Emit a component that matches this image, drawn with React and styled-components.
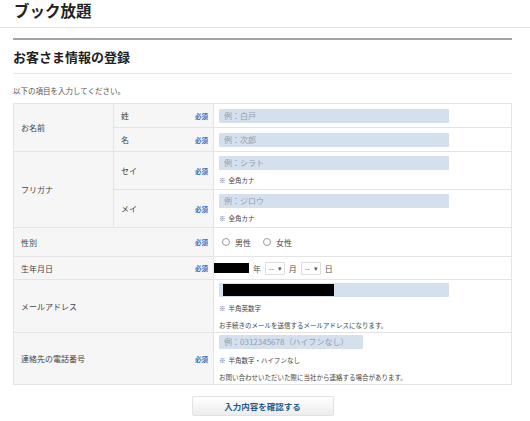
import React from 'react'
import styled, { createGlobalStyle } from 'styled-components'

const GlobalStyle = createGlobalStyle`
  body {
    margin: 0;
    background: #fff;
    font-family: "Noto Sans CJK JP", "Noto Sans", sans-serif;
    color: #333;
  }
`

const Header = styled.header`
  height: 26px;
  border-bottom: 1px solid #e4e4e4;
  padding-left: 14px;
  padding-top: 1px;
`

const Brand = styled.h1`
  margin: 0;
  font-size: 15.5px;
  line-height: 18px;
  font-weight: 700;
  color: #222;
`

const Main = styled.main`
  padding: 10px 18px 0 13px;
`

const SectionTitle = styled.h2`
  margin: 0;
  border-top: 2px solid #a3a3a3;
  border-bottom: 1px solid #e6e6e6;
  height: 33px;
  line-height: 33px;
  font-size: 13px;
  font-weight: 700;
  color: #222;
`

const Intro = styled.p`
  margin: 0;
  padding: 11px 0 6px;
  font-size: 7.5px;
  line-height: 12px;
  color: #555;
`

const Table = styled.table`
  width: 100%;
  border-collapse: collapse;
  border: 1px solid #e4e4e4;
  table-layout: fixed;
`

const Row = styled.tr`
  height: ${p => p.h}px;
`

const LabelCell = styled.td`
  background: #f6f6f6;
  border: 1px solid #e4e4e4;
  padding: 0 5px 0 7px;
  font-size: 8px;
  color: #444;
  vertical-align: middle;
`

const LabelInner = styled.div`
  display: flex;
  justify-content: space-between;
  align-items: center;
`

const Required = styled.span`
  font-size: 6.5px;
  font-weight: 700;
  color: #2f6fc2;
`

const FieldCell = styled.td`
  border: 1px solid #e4e4e4;
  padding: 0 5px;
  vertical-align: middle;
  background: #fff;
`

const TextInput = styled.div`
  width: ${p => p.w || 230}px;
  height: 14px;
  background: #d5e0ef;
  border-radius: 1px;
  padding-left: 5px;
  box-sizing: border-box;
  font-size: 8px;
  line-height: 14px;
  color: #8f9db1;
  position: relative;
`

const Note = styled.div`
  font-size: 6.5px;
  color: #444;
  margin-top: ${p => p.mt || 5}px;
`

const Mark = styled.span`
  color: #666;
  margin-right: 3px;
`

const Radios = styled.div`
  display: flex;
  align-items: center;
  gap: 12px;
  font-size: 8px;
  color: #444;
  padding-left: 3px;
`

const RadioLabel = styled.label`
  display: flex;
  align-items: center;
  gap: 5px;
`

const RadioCircle = styled.span`
  width: 6px;
  height: 6px;
  border: 1px solid #9a9a9a;
  border-radius: 50%;
`

const DateRow = styled.div`
  display: flex;
  align-items: center;
  gap: 4px;
  font-size: 8px;
  color: #555;
  margin-left: -5px;
`

const Redact = styled.span`
  display: inline-block;
  width: ${p => p.w}px;
  height: ${p => p.h}px;
  background: #000;
`

const Select = styled.span`
  display: inline-flex;
  align-items: center;
  gap: 4px;
  height: 11px;
  padding: 0 2px 0 3px;
  border: 1px solid #dcdcdc;
  border-radius: 1px;
  font-size: 7px;
  color: #555;
`

const EmailRedact = styled.span`
  position: absolute;
  left: 4px;
  top: 1px;
  width: 111px;
  height: 12px;
  background: #000;
`

const Actions = styled.div`
  display: flex;
  justify-content: center;
  padding-top: 11px;
`

const Button = styled.button`
  width: 142px;
  height: 20px;
  border: 1px solid #e2e2e2;
  border-radius: 2px;
  background: linear-gradient(#ffffff, #ececec);
  font-family: inherit;
  font-size: 8.5px;
  font-weight: 700;
  color: #1f5b8e;
`

function Label({ text, required, rowSpan, colSpan }) {
  return (
    <LabelCell rowSpan={rowSpan} colSpan={colSpan}>
      <LabelInner>
        <span>{text}</span>
        {required && <Required>必須</Required>}
      </LabelInner>
    </LabelCell>
  )
}

export default function App() {
  return (
    <>
      <GlobalStyle />
      <Header>
        <Brand>ブック放題</Brand>
      </Header>
      <Main>
        <SectionTitle>お客さま情報の登録</SectionTitle>
        <Intro>以下の項目を入力してください。</Intro>
        <Table>
          <colgroup>
            <col style={{ width: 100 }} />
            <col style={{ width: 100 }} />
            <col />
          </colgroup>
          <tbody>
            <Row h={24}>
              <Label text="お名前" rowSpan={2} />
              <Label text="姓" required />
              <FieldCell><TextInput>例：白戸</TextInput></FieldCell>
            </Row>
            <Row h={24}>
              <Label text="名" required />
              <FieldCell><TextInput>例：次郎</TextInput></FieldCell>
            </Row>
            <Row h={38}>
              <Label text="フリガナ" rowSpan={2} />
              <Label text="セイ" required />
              <FieldCell>
                <TextInput>例：シラト</TextInput>
                <Note><Mark>※</Mark>全角カナ</Note>
              </FieldCell>
            </Row>
            <Row h={38}>
              <Label text="メイ" required />
              <FieldCell>
                <TextInput>例：ジロウ</TextInput>
                <Note><Mark>※</Mark>全角カナ</Note>
              </FieldCell>
            </Row>
            <Row h={29}>
              <Label text="性別" required colSpan={2} />
              <FieldCell>
                <Radios>
                  <RadioLabel><RadioCircle />男性</RadioLabel>
                  <RadioLabel><RadioCircle />女性</RadioLabel>
                </Radios>
              </FieldCell>
            </Row>
            <Row h={23}>
              <Label text="生年月日" required colSpan={2} />
              <FieldCell>
                <DateRow>
                  <Redact w={35} h={10} />
                  <span>年</span>
                  <Select>--<span>▾</span></Select>
                  <span>月</span>
                  <Select>--<span>▾</span></Select>
                  <span>日</span>
                </DateRow>
              </FieldCell>
            </Row>
            <Row h={53}>
              <Label text="メールアドレス" colSpan={2} />
              <FieldCell>
                <TextInput><EmailRedact /></TextInput>
                <Note mt={6}><Mark>※</Mark>半角英数字</Note>
                <Note mt={7}>お手続きのメールを送信するメールアドレスになります。</Note>
              </FieldCell>
            </Row>
            <Row h={52}>
              <Label text="連絡先の電話番号" required colSpan={2} />
              <FieldCell>
                <TextInput w={144}>例：0312345678（ハイフンなし）</TextInput>
                <Note mt={6}><Mark>※</Mark>半角数字・ハイフンなし</Note>
                <Note mt={7}>お問い合わせいただいた際に当社から連絡する場合があります。</Note>
              </FieldCell>
            </Row>
          </tbody>
        </Table>
        <Actions>
          <Button>入力内容を確認する</Button>
        </Actions>
      </Main>
    </>
  )
}
